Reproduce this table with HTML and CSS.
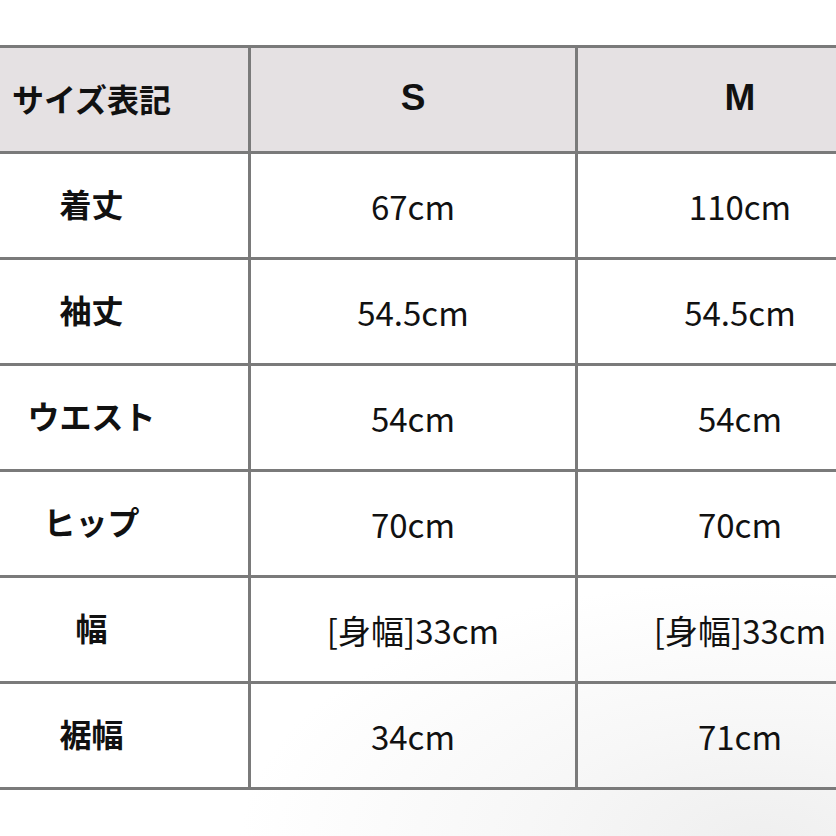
FILE: index.html
```html
<!DOCTYPE html>
<html lang="ja">
<head>
<meta charset="utf-8">
<title>サイズ表記</title>
<link rel="stylesheet" href="styles.css">
</head>
<body>
<div class="page">
  <table class="size-table">
    <colgroup>
      <col class="c-label">
      <col class="c-size">
      <col class="c-size">
    </colgroup>
    <thead>
      <tr class="head">
        <th class="label">サイズ表記</th>
        <th class="size">S</th>
        <th class="size">M</th>
      </tr>
    </thead>
    <tbody>
      <tr><th class="label">着丈</th><td>67cm</td><td>110cm</td></tr>
      <tr><th class="label">袖丈</th><td>54.5cm</td><td>54.5cm</td></tr>
      <tr><th class="label">ウエスト</th><td>54cm</td><td>54cm</td></tr>
      <tr><th class="label">ヒップ</th><td>70cm</td><td>70cm</td></tr>
      <tr><th class="label">幅</th><td>[身幅]33cm</td><td>[身幅]33cm</td></tr>
      <tr><th class="label">裾幅</th><td>34cm</td><td>71cm</td></tr>
    </tbody>
  </table>
</div>
</body>
</html>
```

FILE: styles.css
```css
html, body {
  margin: 0;
  padding: 0;
}
body {
  width: 836px;
  height: 836px;
  overflow: hidden;
  background: radial-gradient(ellipse 520px 260px at 760px 840px, #efefef 0%, #f7f7f7 45%, #ffffff 100%);
  font-family: "Noto Sans CJK JP", "Noto Sans", sans-serif;
  color: #111;
}
.page {
  padding-top: 45px;
}
.size-table {
  margin-left: -68px;
  border-collapse: collapse;
  table-layout: fixed;
  width: 970px;
}
.c-label { width: 316px; }
.c-size { width: 327px; }
.size-table th,
.size-table td {
  border: 3px solid #7a7a7a;
  height: 103px;
  padding: 0;
  text-align: center;
  vertical-align: middle;
  background: transparent;
}
.size-table .head th {
  background: #e5e1e3;
  height: 99px;
  padding-bottom: 4px;
}
.label {
  font-family: "Noto Sans CJK JP", sans-serif;
  font-weight: 700;
  font-size: 32px;
}
.size-table tbody th {
  height: 97px;
  padding-bottom: 6px;
}
.size {
  font-family: "Liberation Sans", Arial, sans-serif;
  font-weight: 700;
  font-size: 37px;
}
.size-table td {
  font-family: "Noto Sans CJK JP", sans-serif;
  font-weight: 400;
  font-size: 33px;
  height: 102px;
  padding-top: 1px;
}
```
